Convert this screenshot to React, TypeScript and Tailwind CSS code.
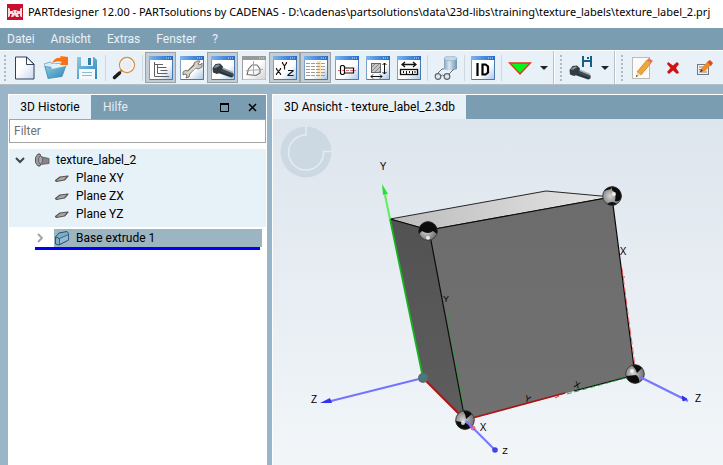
import type { ReactNode } from 'react'
import clsx from 'clsx'

const menuItems = ['Datei', 'Ansicht', 'Extras', 'Fenster', '?']
const planes = ['Plane XY', 'Plane ZX', 'Plane YZ']

// Shared window frame for the view toggles
function WindowIcon({ children, muted }: { children: ReactNode; muted?: boolean }) {
  return (
    <svg viewBox="0 0 24 24" className="size-6">
      <rect x="0.5" y="0.5" width="23" height="23" fill={muted ? 'url(#mutedPane)' : 'url(#pane)'} stroke={muted ? '#a3a3a3' : '#7fa0c4'} />
      <rect width="24" height="4" fill={muted ? '#999' : 'url(#bar)'} />
      <path d="M17 2h1M19 2h1M21 2h1" stroke={muted ? '#ddd' : '#cfe4fb'} />
      <path d="M23.500 4v19.500H1" fill="none" stroke={muted ? '#c4c4c4' : '#4a78ad'} />
      {children}
    </svg>
  )
}

function Bolt() {
  return (
    <g>
      <path d="M9 11l13 5.500q1.500 2 0 4.500l-2 .5L7 17z" fill="#3c4a54" />
      <path d="M10 11.500l12 5" stroke="#a3b2bc" strokeWidth="1.600" />
      <path d="M9 16l12 4.500" stroke="#1c2429" />
      <path d="M1.500 12l3-4 4.500-.5 3 3-1.500 5.500-4.500 2-4-1.500z" fill="#333c43" />
      <path d="M2.500 12l2.500-3 3-.5 1 1-3.500 2z" fill="#83929c" />
    </g>
  )
}

function ToolButton({ label, pressed, children }: { label: string; pressed?: boolean; children: ReactNode }) {
  return (
    <button
      type="button"
      aria-label={label}
      aria-pressed={pressed}
      className={clsx(
        'flex h-[31px] w-[31px] shrink-0 items-center justify-center border',
        pressed ? 'border-[#9aa3a8] bg-[#c3cdd3]' : 'border-transparent',
      )}
    >
      {children}
    </button>
  )
}

function MenuArrow({ label }: { label: string }) {
  return (
    <button type="button" aria-label={label} className="flex h-[31px] w-[18px] shrink-0 items-center justify-center">
      <svg viewBox="0 0 8 4" className="h-1 w-2">
        <path d="M0 0h8L4 4z" fill="#222" />
      </svg>
    </button>
  )
}

function Separator() {
  return (
    <div className="flex h-[26px] w-1.5 shrink-0 justify-center">
      <div className="w-px bg-[#cdd8df]" />
    </div>
  )
}

function Handle() {
  return (
    <div className="flex h-[26px] w-[9px] shrink-0 justify-center">
      <div className="w-0 border-l-2 border-dotted border-[#b0bac1]" />
    </div>
  )
}

function GroupEnd() {
  return (
    <div className="flex w-[3px] shrink-0 self-stretch">
      <div className="w-px bg-[#b5c2cb]" />
      <div className="w-px bg-white" />
    </div>
  )
}

function Toolbar() {
  return (
    <div className="flex h-[35px] items-center overflow-hidden border-t border-b border-t-white border-b-[#b4bec5] bg-[#e7f1f7]">
      <Handle />
      <ToolButton label="Neu">
        <svg viewBox="0 0 24 24" className="size-6">
          <path d="M2.500 1h11l7.500 7v15H2.500z" fill="url(#paper)" stroke="#33405a" />
          <path d="M13.500 1v7.500H21z" fill="#fff" stroke="#33405a" strokeLinejoin="round" />
        </svg>
      </ToolButton>
      <ToolButton label="Öffnen">
        <svg viewBox="0 0 24 24" className="size-6">
          <path d="M0 8l6-2 3 2 10-1 1 5L5 22z" fill="#d8ebf5" stroke="#6ba3bf" strokeWidth="0.800" />
          <path d="M4 22.500l-3-12 7 1 14-2-4 11z" fill="url(#folder)" stroke="#3d86ab" strokeWidth="0.700" />
          <path d="M7 11l1-3 13 0 1 2-14 3z" fill="#e3f1f8" />
          <path d="M8 7Q11 1 17 2l-1-2 8 1v8h-8l2-3q-4-2-10 1z" fill="#f87214" />
        </svg>
      </ToolButton>
      <ToolButton label="Speichern">
        <svg viewBox="0 0 24 24" className="size-6">
          <path d="M2 1h17l3 3v19H2z" fill="url(#folder)" />
          <rect x="6" y="1" width="12" height="9" fill="#e9f3f9" />
          <rect x="13" y="2" width="3" height="7" fill="#2f7fae" />
          <rect x="4" y="13" width="16" height="10" fill="#f3f8fb" />
          <path d="M7 16.500h10M7 19.500h10" stroke="#8ebbd2" />
        </svg>
      </ToolButton>
      <Separator />
      <ToolButton label="Suchen">
        <svg viewBox="0 0 24 24" className="size-6">
          <circle cx="15" cy="9" r="7.500" fill="#e9eef5" stroke="#d98d48" strokeWidth="1.300" />
          <circle cx="15" cy="9" r="6.200" fill="none" stroke="#fff" />
          <path d="M10 14l-2 2" stroke="#c8782a" strokeWidth="2" />
          <path d="M7.500 17l-5 4.500" stroke="#1b1b1b" strokeWidth="3.500" strokeLinecap="round" />
        </svg>
      </ToolButton>
      <Separator />
      <ToolButton label="Historie" pressed>
        <WindowIcon>
          <path d="M5.500 6v14.500H20M5 8.500h9M8.500 11.500h9M8.500 8.500v9h10M11.500 14.500h7" fill="none" stroke="#606060" />
        </WindowIcon>
      </ToolButton>
      <ToolButton label="Werkzeuge">
        <WindowIcon>
          <path d="M7 18l9-9" stroke="#6d6a63" strokeWidth="4.500" />
          <path d="M3 16l3-2 4 3-1 4-3 1 1-3-2-1-2 1zM14 7l3-2 3 0-2 3 2 1 2-2 0 4-4 2-4-2z" fill="#cfcdc5" stroke="#6d6a63" strokeWidth="0.900" />
          <path d="M7.500 17.500l9-8" stroke="#d9d7d0" strokeWidth="2.600" />
        </WindowIcon>
      </ToolButton>
      <ToolButton label="Teil" pressed>
        <WindowIcon>
          <Bolt />
        </WindowIcon>
      </ToolButton>
      <ToolButton label="Skizze">
        <WindowIcon muted>
          <path d="M5 18.500L6.500 13 10 9l5 0 3 4v4l-4 2.500z" fill="none" stroke="#6e6e6e" strokeWidth="1.100" />
          <path d="M11.500 5v15M4 14.500l17-1" fill="none" stroke="#a3a3a3" strokeWidth="0.900" />
        </WindowIcon>
      </ToolButton>
      <ToolButton label="Koordinatensystem" pressed>
        <WindowIcon>
          <path
            d="M3.500 12v1l4 5v1M7.500 12v1l-4 5v1M9.500 6v1l2 3 2-3V6M11.500 10v3.500M15 14.500h5v.5l-5 4v.5h5.500"
            fill="none"
            stroke="#151515"
            strokeWidth="1.200"
          />
        </WindowIcon>
      </ToolButton>
      <ToolButton label="Tabelle" pressed>
        <WindowIcon>
          <rect x="13" y="5" width="4" height="17" fill="#fbe6ae" />
          <path d="M2 7.500h20M2 10.500h20M2 13.500h20M2 16.500h20M2 19.500h20" stroke="#a09c92" strokeDasharray="4 1" />
        </WindowIcon>
      </ToolButton>
      <ToolButton label="Vorschau">
        <WindowIcon>
          <path d="M3 14.500h18" stroke="#ee6a6a" strokeDasharray="3 1" />
          <path d="M5.500 10.500l1-1h2l1 1v7l-1 1h-2l-1-1zM9.500 12h9v5h-9" fill="none" stroke="#111" strokeWidth="1.200" />
        </WindowIcon>
      </ToolButton>
      <ToolButton label="Abmessungen">
        <WindowIcon>
          <rect x="5.500" y="7.500" width="9" height="9" fill="#c6c6c6" stroke="#666" />
          <path d="M6 11l3-3M6 15l7-7M9 16l5-5M13 16l1-1" stroke="#888" />
          <path d="M18.500 7v11M16.500 9l2-2 2 2M16.500 16l2 2 2-2M5 20.500h11M7 18.500l-2 2 2 2M14 18.500l2 2-2 2" fill="none" stroke="#111" />
        </WindowIcon>
      </ToolButton>
      <ToolButton label="Messen">
        <WindowIcon>
          <path d="M5 8.500h14M8 6L5 8.500 8 11M16 6l3 2.500-3 2.500" fill="none" stroke="#111" strokeWidth="1.300" />
          <rect x="3.500" y="13.500" width="17" height="5" fill="#fff" stroke="#111" strokeWidth="1.300" />
          <path d="M6.500 15v2M9.500 15v3M12.500 15v2M15.500 15v3M18 15v2" stroke="#111" />
        </WindowIcon>
      </ToolButton>
      <Separator />
      <ToolButton label="Ansehen">
        <svg viewBox="0 0 24 24" className="size-6">
          <path d="M10 2v11q6 3 13 0V2z" fill="url(#steel)" />
          <ellipse cx="16.500" cy="2.500" rx="6.500" ry="2.300" fill="#c6d9e4" stroke="#7d9db1" strokeWidth="0.500" />
          <path d="M2 19l6-6h2M14 19l6-6" fill="none" stroke="#666e73" />
          <circle cx="4" cy="20.500" r="2.800" fill="#dfe8ed" stroke="#5d656a" strokeWidth="1.200" />
          <circle cx="13" cy="20.500" r="2.800" fill="#dfe8ed" stroke="#5d656a" strokeWidth="1.200" />
          <path d="M7 20q1.500-2 3 0" fill="none" stroke="#5d656a" />
        </svg>
      </ToolButton>
      <Separator />
      <ToolButton label="ID">
        <WindowIcon>
          <path d="M6.500 7v13M11.500 8.500v10h3l2.500-2v-6l-2.500-2z" fill="none" stroke="#000" strokeWidth="2.200" />
        </WindowIcon>
      </ToolButton>
      <Separator />
      <ToolButton label="Ausführen">
        <svg viewBox="0 0 24 24" className="size-6">
          <path d="M1.500 7h21L12 18z" fill="#00f51c" stroke="#e8331b" strokeWidth="1.300" />
        </svg>
      </ToolButton>
      <MenuArrow label="Ausführen Optionen" />
      <GroupEnd />
      <Handle />
      <ToolButton label="Teil speichern">
        <svg viewBox="0 0 24 24" className="size-6">
          <g transform="translate(-1 2)">
            <Bolt />
          </g>
          <path d="M13 0h10v11H13z" fill="#165e87" />
          <path d="M15 0h6v4h-6zM15 6h6v5h-6z" fill="#e7f1f7" />
          <path d="M18 1h2v2h-2z" fill="#165e87" />
        </svg>
      </ToolButton>
      <MenuArrow label="Teil speichern Optionen" />
      <GroupEnd />
      <Handle />
      <ToolButton label="Bearbeiten">
        <svg viewBox="0 0 24 24" className="size-6">
          <rect x="2.500" y="1.500" width="17" height="21" fill="#fbfbf8" stroke="#b9bcba" />
          <path d="M7 16L17 4l4 3L11 19z" fill="#f0a63c" stroke="#c27a1e" strokeWidth="0.700" />
          <path d="M17 4l2-2 4 3-2 2z" fill="#e2785a" />
          <path d="M7 16l4 3-5 2z" fill="#f5d9a8" />
          <path d="M6.500 19l1.500 1-2 1z" fill="#222" />
        </svg>
      </ToolButton>
      <ToolButton label="Löschen">
        <svg viewBox="0 0 24 24" className="size-6">
          <path d="M7 6l5 3.500L16 6l2 2-3 4 3 4.500-2 1.500-4-3.500L8 18l-2-2 3.500-4L6 8z" fill="#cf1313" />
        </svg>
      </ToolButton>
      <ToolButton label="Umbenennen">
        <svg viewBox="0 0 24 24" className="size-6">
          <rect x="5.500" y="8.500" width="11" height="10" fill="#eef0f1" stroke="#777" />
          <path d="M7 11h6M7 13.500h4M7 16h8" stroke="#888" />
          <path d="M9 13l6-7 4 3-6 6-5 1z" fill="#f28a24" />
          <path d="M15 6l3-2 3 3-2 3z" fill="#e04a1d" />
          <path d="M9 13l-1 3 3-1z" fill="#333" />
        </svg>
      </ToolButton>
    </div>
  )
}

function PlaneIcon() {
  return (
    <svg viewBox="0 0 16 16" className="size-4">
      <path d="M1.500 10.500l4.500-3.500 8-1-3.500 4-8 1.500z" fill="#aaa8a6" stroke="#565656" strokeWidth="1.200" strokeLinejoin="round" />
    </svg>
  )
}

function HistoryPanel() {
  return (
    <section className="flex w-[259px] shrink-0 flex-col border-t border-white bg-white">
      <div className="mx-px flex h-6 bg-[#7b9db2]" role="tablist">
        <button type="button" role="tab" aria-selected="true" className="w-[82px] bg-[#e7f1f7] text-black">
          3D Historie
        </button>
        <button type="button" role="tab" aria-selected="false" className="px-3 text-[#e3edf3]">
          Hilfe
        </button>
        <div className="ml-auto flex items-center">
          <button type="button" aria-label="Maximieren" className="flex w-7 justify-center">
            <svg viewBox="0 0 9 9" className="size-[9px]">
              <path d="M0.500 1h8v7.500h-8z" fill="none" stroke="#000" />
              <path d="M0 1h9" stroke="#000" strokeWidth="2" />
            </svg>
          </button>
          <button type="button" aria-label="Schließen" className="flex w-7 justify-center">
            <svg viewBox="0 0 9 9" className="size-[9px]">
              <path d="M1 1l7 7M8 1L1 8" stroke="#000" strokeWidth="1.500" />
            </svg>
          </button>
        </div>
      </div>
      <input
        type="text"
        aria-label="Filter"
        placeholder="Filter"
        className="mx-px h-6 border border-[#a5a5a5] bg-white px-1 placeholder:text-[#6f6f6f]"
      />
      <div className="mx-px mt-1.5 bg-[#e6f1f8] pt-0.5 pb-1">
        <div className="flex h-[18px] items-center">
          <button type="button" aria-label="Zuklappen" className="flex w-[25px] pl-1.5">
            <svg viewBox="0 0 10 7" className="h-[7px] w-2.5">
              <path d="M1 1l4 4 4-4" fill="none" stroke="#444" strokeWidth="2" />
            </svg>
          </button>
          <svg viewBox="0 0 16 14" className="h-3.5 w-4">
            <path d="M6 3.500l9 2v5L6 11.500z" fill="#858585" stroke="#555" strokeWidth="0.800" />
            <path d="M4 1l2 0 1.500 4v4L6 13H4L1.500 9.500v-5z" fill="#9c9c9c" stroke="#555" />
            <ellipse cx="6.500" cy="7" rx="2" ry="4" fill="#aaa" stroke="#555" strokeWidth="0.800" />
          </svg>
          <span className="pl-1.5">texture_label_2</span>
        </div>
        {planes.map((plane) => (
          <div key={plane} className="flex h-[18px] items-center gap-1.5 pl-[45px]">
            <PlaneIcon />
            <span>{plane}</span>
          </div>
        ))}
      </div>
      <div className="mt-0.5 flex h-[18px] items-center pr-[5px] pl-[27px]">
        <button type="button" aria-label="Aufklappen" className="flex w-[19px] pl-0.5">
          <svg viewBox="0 0 6 10" className="h-2.5 w-1.5">
            <path d="M1 1l4 4-4 4" fill="none" stroke="#a0a0a0" strokeWidth="1.800" />
          </svg>
        </button>
        <div className="flex h-full flex-1 items-center gap-1.5 bg-[#9db4c1]">
          <svg viewBox="0 0 16 16" className="size-4">
            <path d="M1.500 7L5 3l8-1.500 1.500 2v6.500L5 15l-3.500-1z" fill="#7faecb" stroke="#28536f" />
            <path d="M5.500 8.500l9-4v5.500l-9 4.500z" fill="#93b9d0" stroke="#28536f" strokeWidth="0.800" />
            <path d="M1.500 7l4 1.500" fill="none" stroke="#28536f" />
          </svg>
          <span>Base extrude 1</span>
        </div>
      </div>
      <div className="mr-[7px] ml-[27px] h-[3px] bg-[#0000ff]" />
    </section>
  )
}

// Chrome ball on a corner of the part, dark holds its black patches
function Marker({ x, y, dark, light }: { x: number; y: number; dark: string; light: [number, number] }) {
  return (
    <g transform={`translate(${x} ${y})`}>
      <circle r="9.500" fill="url(#ball)" />
      <path d={dark} fill="#0c0c0c" />
      <circle cx={light[0]} cy={light[1]} r="2" fill="#fff" fillOpacity="0.800" />
      <circle r="9.300" fill="none" stroke="#2b2b2b" strokeWidth="0.800" />
    </g>
  )
}

function Scene() {
  return (
    <svg viewBox="273 119 450 346" className="block w-full" role="img" aria-label="texture_label_2">
      <circle cx="306" cy="152" r="25.500" fill="#cdd9e2" />
      <path d="M306 126v9a17.500 17.500 0 1 0 17.500 16.500h8" fill="none" stroke="#e4ecf2" strokeWidth="1.500" />

      <path d="M390 219L546 191 612 197 429 230z" fill="url(#top)" stroke="#111" strokeWidth="0.900" />
      <path d="M390 219l39 11 36 190-42-42z" fill="url(#side)" />
      <path d="M429 230l183-33 23 178-170 45z" fill="url(#front)" />
      <path d="M390 219l39 11 183-33 23 178-61 16M429 230l36 190" fill="none" stroke="#0a0a0a" strokeWidth="1.200" />
      <path d="M447 309l18 105" stroke="#22a52c" strokeWidth="0.700" strokeDasharray="8 3" />
      <path d="M622 268l13 98" stroke="#f33" strokeWidth="0.700" strokeDasharray="7 3" />
      <path d="M567 394l66-18" stroke="#22a52c" strokeWidth="0.900" strokeDasharray="5 3" />
      <path d="M465 420l100-27" stroke="#a91414" strokeWidth="1.800" />
      <path d="M555 398l4-2M623 277h2" stroke="#f33" />

      <path d="M390 219l33 159" stroke="#16b51d" strokeWidth="1.800" />
      <path d="M390 219l-5-24" stroke="#5dee5d" strokeWidth="2" />
      <path d="M382 184l6 10-5 1z" fill="#22e52a" />
      <path d="M423 378l42 42" stroke="#aa1616" strokeWidth="2" />
      <path d="M423 378l-96 24" stroke="#7474ff" strokeWidth="2.200" />
      <path d="M320 403l10-5 2 5z" fill="#3434ed" />
      <circle cx="423" cy="378" r="5" fill="#5a6f75" />
      <circle cx="423" cy="377" r="2.500" fill="#398184" />

      <Marker x={428} y={231} dark="M-9 3A9.500 9.500 0 0 1-4-8.600Q0-10.500 4-8.600A9.500 9.500 0 0 1 9 3L5 0Q0 4-6 0z" light={[0, 7]} />
      <Marker x={612} y={196} dark="M0-9.500A9.500 9.500 0 0 1 9 3Q6 6 3 5 5-3 0-6zM-5 8Q0 4 5 8 0 11-5 8zM-8-5Q-5-9 0-9.500L-1-7Q-5-6-8-5z" light={[2, -2]} />
      <Marker x={635} y={374} dark="M-9 2L1 1Q5 4 4 8.600A9.500 9.500 0 0 1-9 2zM-3-9Q3-10.500 7-6L2-1Q1-5-3-9z" light={[-3, -3]} />
      <Marker x={465} y={420} dark="M-9.500 1L-3 2Q4 3 5 8A9.500 9.500 0 0 1-9.500 1zM-2-9.300Q4-10 7-6L1-1Q1-5-2-9.300z" light={[-2, 3]} />

      <path d="M466 421l29 29" stroke="#7777ff" strokeWidth="2.200" />
      <circle cx="495" cy="450" r="2.800" fill="#4343e8" />
      <circle cx="473" cy="428" r="2" fill="none" stroke="#f44" />
      <path d="M640 377l48 24" stroke="#7777ff" strokeWidth="2.200" />
      <path d="M682 396l5 3-4 2z" fill="#3333e8" stroke="#3333e8" />

      <g fill="#000" fontSize="10" textAnchor="middle" className="font-['Liberation_Sans']">
        <text x="383" y="170">Y</text>
        <text x="314" y="403">Z</text>
        <text x="623" y="255">X</text>
        <text x="446" y="302" fontSize="9">Y</text>
        <text x="528" y="402" fontSize="9" transform="rotate(20 528 398)">Y</text>
        <text x="577" y="388" fontSize="9" transform="rotate(20 577 385)">X</text>
        <text x="483" y="431">X</text>
        <text x="505" y="454" fontSize="9">Z</text>
        <text x="698" y="402">Z</text>
      </g>
    </svg>
  )
}

export default function App() {
  return (
    <div className="flex min-h-screen flex-col overflow-hidden bg-[#9bb5c8] font-['Roboto','Open_Sans',sans-serif] text-xs text-black">
      <svg className="absolute size-0" aria-hidden="true">
        <defs>
          <linearGradient id="pane" x2="1" y2="1">
            <stop offset="0.600" stopColor="#fff" />
            <stop offset="1" stopColor="#a9c6e6" />
          </linearGradient>
          <linearGradient id="mutedPane" x2="1" y2="1">
            <stop offset="0.500" stopColor="#fff" />
            <stop offset="1" stopColor="#d2d2d2" />
          </linearGradient>
          <linearGradient id="bar">
            <stop offset="0" stopColor="#7db4f0" />
            <stop offset="1" stopColor="#2268c6" />
          </linearGradient>
          <linearGradient id="paper" x2="1" y2="1">
            <stop offset="0.400" stopColor="#fff" />
            <stop offset="1" stopColor="#c7d8f1" />
          </linearGradient>
          <linearGradient id="folder" x2="1" y2="1">
            <stop offset="0" stopColor="#8cc9e4" />
            <stop offset="1" stopColor="#2f86b3" />
          </linearGradient>
          <linearGradient id="steel">
            <stop offset="0" stopColor="#7fa4bb" />
            <stop offset="0.400" stopColor="#d9e8f0" />
            <stop offset="1" stopColor="#6c93ab" />
          </linearGradient>
          <linearGradient id="top">
            <stop offset="0" stopColor="#bcbcbc" />
            <stop offset="1" stopColor="#e6e6e6" />
          </linearGradient>
          <linearGradient id="side" x2="0" y2="1">
            <stop offset="0" stopColor="#525252" />
            <stop offset="1" stopColor="#5e5e5e" />
          </linearGradient>
          <linearGradient id="front" x2="0" y2="1">
            <stop offset="0" stopColor="#6c6c6c" />
            <stop offset="1" stopColor="#717171" />
          </linearGradient>
          <radialGradient id="ball" cx="0.400" cy="0.500">
            <stop offset="0" stopColor="#d4d4d4" />
            <stop offset="1" stopColor="#7a7a7a" />
          </radialGradient>
        </defs>
      </svg>

      <header className="flex h-7 items-center gap-[5px] overflow-hidden bg-white pb-1 pl-[7px]">
        <svg viewBox="0 0 16 16" className="size-4 shrink-0">
          <rect width="16" height="16" fill="#c8102e" />
          <path d="M1 4h1l1 1v2h2l2-1h2l2 1h2V5l1-1h1v9h-1l-1-1v-2h-2l1 3H9l-1-2-2 2H4l1-3H3v2l-1 1H1z" fill="#f6dfe1" />
          <path d="M6 8h1M9 8h1" stroke="#c8102e" />
        </svg>
        <h1 className="font-['Noto_Sans','Open_Sans',sans-serif] text-[11px] whitespace-nowrap">
          PARTdesigner 12.00 - PARTsolutions by CADENAS - D:\cadenas\partsolutions\data\23d-libs\training\texture_labels\texture_label_2.prj
        </h1>
      </header>

      <nav className="flex h-[22px] items-center gap-4 bg-[#7b9db2] pl-[7px] text-[#eaf2f7]">
        {menuItems.map((item) => (
          <button key={item} type="button">
            {item}
          </button>
        ))}
      </nav>

      <Toolbar />

      <main className="flex flex-1 gap-[5px] pt-[9px] pl-2">
        <HistoryPanel />
        <section className="flex min-w-0 flex-1 flex-col border-t border-l border-white bg-linear-to-b from-[#dce4ec] to-[#f2f6f9]">
          <div className="flex h-6 bg-[#7b9db2]" role="tablist">
            <button type="button" role="tab" aria-selected="true" className="w-[193px] bg-[#e7f1f7]">
              3D Ansicht - texture_label_2.3db
            </button>
          </div>
          <Scene />
        </section>
      </main>
    </div>
  )
}
